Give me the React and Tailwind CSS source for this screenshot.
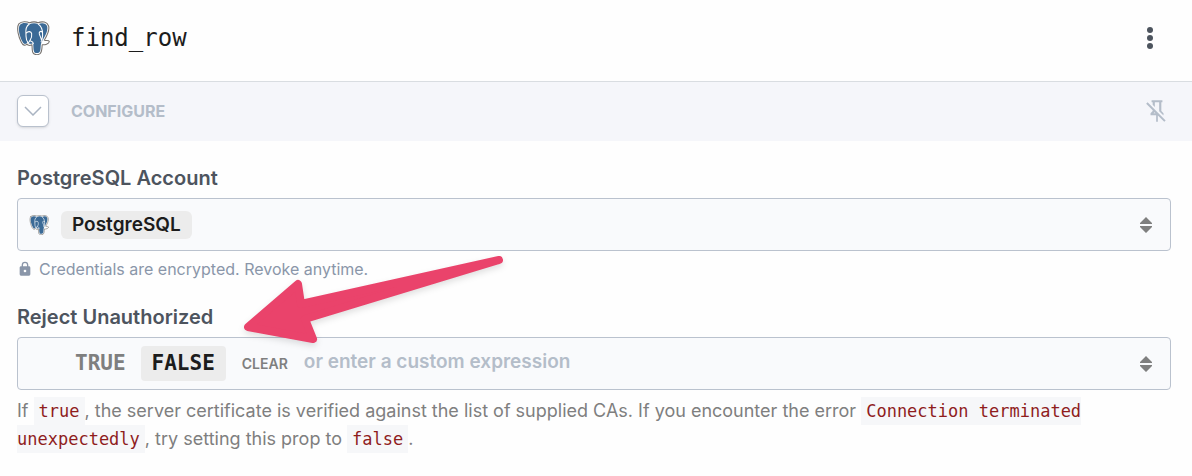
import React, { useState } from 'react';

const PostgresIcon = ({ className }) => (
    <svg viewBox="0 0 96 96" className={className} aria-hidden="true">
        <g strokeLinejoin="round" strokeLinecap="round">
            <path
                d="M8 8C16 0 30 1 38 5C46 2 56 2 62 5C74 0 88 2 92 14C96 28 86 44 80 54C84 57 92 53 94 58C92 65 82 68 74 67C73 76 74 86 68 92C62 97 49 96 47 88C45 81 46 74 45 67C38 71 32 68 31 65C27 71 19 69 15 60C8 46 0 20 8 8Z"
                fill="#fff"
                stroke="#77736f"
                strokeWidth="3"
            />
            <path
                d="M11 11C18 4 30 5 38 9C46 5 56 5 63 9C73 4 85 6 88 15C91 28 82 43 75 55C71 61 71 64 70 68C69 78 70 84 66 88C61 92 52 91 51 86C48 78 50 70 48 62C44 66 37 65 33 60C28 67 21 66 18 58C11 44 4 21 11 11Z"
                fill="#3b6a96"
            />
            <path
                d="M37 9C29 14 27 24 28 36C29 47 27 54 34 61M29 34C34 28 43 29 44 35C45 43 46 47 40 54C37 58 38 61 33 61M40 56C44 58 48 57 49 64M63 9C70 14 75 23 75 36C76 45 73 51 73 55M74 31C69 27 64 31 66 37C68 43 71 48 72 54M71 58C76 62 84 61 90 59"
                fill="none"
                stroke="#fff"
                strokeWidth="3"
            />
        </g>
    </svg>
);

const LockIcon = () => (
    <svg viewBox="0 0 24 24" className="size-4 shrink-0 fill-current" aria-hidden="true">
        <path d="M12,17A2,2 0 0,0 14,15C14,13.89 13.1,13 12,13A2,2 0 0,0 10,15A2,2 0 0,0 12,17M18,8A2,2 0 0,1 20,10V20A2,2 0 0,1 18,22H6A2,2 0 0,1 4,20V10C4,8.89 4.9,8 6,8H7V6A5,5 0 0,1 12,1A5,5 0 0,1 17,6V8H18M12,3A3,3 0 0,0 9,6V8H15V6A3,3 0 0,0 12,3Z" />
    </svg>
);

const PinOffIcon = () => (
    <svg viewBox="0 0 24 24" className="size-[26px] fill-current" aria-hidden="true">
        <path d="M8,6.2V4H7V2H17V4H16V12L18,14V16H17.8L14,12.2V4H10V8.2L8,6.2M20,20.7L18.7,22L12.8,16.1V22H11.2V16H6V14L8,12V11.3L2,5.3L3.3,4L20,20.7M8.8,14H10.6L9.7,13.1L8.8,14Z" />
    </svg>
);

const SortIcon = () => (
    <svg viewBox="0 0 12 16" className="h-4 w-3 shrink-0 fill-[#7f7f7f]" aria-hidden="true">
        <path d="M6 0L12 6V7H0V6ZM0 9H12V10L6 16L0 10Z" />
    </svg>
);

const Code = ({ children }) => (
    <code className="bg-[#f6f7f9] px-[5px] py-1 font-['DejaVu_Sans_Mono',monospace] text-[17px] text-[#8f1d1d]">
        {children}
    </code>
);

const fieldClass = 'flex h-[53px] items-center rounded border border-[#bac2ce] bg-[#f9fafc] pr-[18px]';
const labelClass = 'block text-xl leading-6 font-semibold text-[#4d545e]';
const choiceBase = "h-[35px] rounded px-[11px] font-['DejaVu_Sans_Mono',monospace] text-[21px] font-bold";

function App() {
    const [open, setOpen] = useState(true);
    const [reject, setReject] = useState('false');
    const [expression, setExpression] = useState('');

    const choiceClass = (value) =>
        `${choiceBase} ${reject === value ? 'bg-[#ececec] text-[#1c1c1c]' : 'text-[#7f7f7f]'}`;

    return (
        <div className="relative min-h-screen bg-[#fefefe] font-['Inter',sans-serif]">
            <header className="flex h-[82px] items-center border-b border-[#d9dde1] pr-[30px] pb-[5px] pl-4">
                <PostgresIcon className="size-[34px]" />
                <h1 className="ml-[21px] flex-1 font-['DejaVu_Sans_Mono',monospace] text-2xl text-[#1c1c1c]">find_row</h1>
                <button type="button" aria-label="More" className="px-2 py-1">
                    <svg viewBox="0 0 8 24" className="h-6 w-2 fill-[#4d545e]">
                        <circle cx="4" cy="4" r="3" />
                        <circle cx="4" cy="12" r="3" />
                        <circle cx="4" cy="20" r="3" />
                    </svg>
                </button>
            </header>

            <div className="flex h-[59px] items-center bg-[#f5f6fa] pr-[22px] pb-[2px] pl-[17px] text-[#b4bdc9]">
                <button
                    type="button"
                    aria-label="Toggle configure"
                    aria-expanded={open}
                    onClick={() => setOpen(!open)}
                    className="flex size-8 items-center justify-center rounded-md border border-[#b9c1cd] bg-white shadow-sm"
                >
                    <svg viewBox="0 0 18 10" className="h-[10px] w-[18px] fill-none stroke-[#aab4c2] stroke-[1.5]">
                        <path d="M1 1L9 9L17 1" />
                    </svg>
                </button>
                <h2 className="ml-[22px] flex-1 text-base font-bold">CONFIGURE</h2>
                <button type="button" aria-label="Unpin">
                    <PinOffIcon />
                </button>
            </div>

            {open && (
                <main className="pt-[25px] pr-[21px] pl-[17px]">
                    <label htmlFor="account" className={labelClass}>PostgreSQL Account</label>
                    <div className={`${fieldClass} mt-2 pl-[11px]`}>
                        <PostgresIcon className="size-5 shrink-0" />
                        <select
                            id="account"
                            className="ml-3 h-7 appearance-none rounded-md bg-[#ececec] px-[11px] text-[19px] leading-7 font-semibold text-[#1c1c1c]"
                        >
                            <option>PostgreSQL</option>
                        </select>
                        <span className="flex-1" />
                        <SortIcon />
                    </div>
                    <p className="mt-[7px] flex items-center gap-[6px] text-base leading-[22px] text-[#8a96a9]">
                        <LockIcon />
                        Credentials are encrypted. Revoke anytime.
                    </p>

                    <label htmlFor="expression" className={`${labelClass} mt-[25px]`}>Reject Unauthorized</label>
                    <div className={`${fieldClass} mt-2 pl-[46px]`}>
                        <button type="button" onClick={() => setReject('true')} className={choiceClass('true')}>
                            TRUE
                        </button>
                        <button
                            type="button"
                            onClick={() => setReject('false')}
                            className={`ml-1 ${choiceClass('false')}`}
                        >
                            FALSE
                        </button>
                        <button
                            type="button"
                            onClick={() => setReject('')}
                            className="ml-4 text-sm font-semibold text-[#7f7f7f]"
                        >
                            CLEAR
                        </button>
                        <input
                            id="expression"
                            type="text"
                            value={expression}
                            onChange={(e) => setExpression(e.target.value)}
                            placeholder="or enter a custom expression"
                            className="ml-4 h-8 min-w-0 flex-1 bg-transparent pb-1 text-[19px] font-semibold outline-none placeholder:text-[#b4bdc9]"
                        />
                        <SortIcon />
                    </div>
                    <p className="mt-[7px] text-lg leading-7 text-[#7f7f7f]">
                        If <Code>true</Code>, the server certificate is verified against the list of supplied CAs. If you
                        encounter the error <Code>Connection terminated unexpectedly</Code>, try setting this prop
                        to <Code>false</Code>.
                    </p>
                </main>
            )}

            {/* callout arrow over the form */}
            <svg
                viewBox="0 0 270 96"
                className="pointer-events-none absolute top-[252px] left-[238px] h-24 w-[270px] overflow-visible drop-shadow-md"
                aria-hidden="true"
            >
                <path
                    d="M10 75L60 32L63 52L261 8L67 67L75 87Z"
                    fill="#ea436b"
                    stroke="#ea436b"
                    strokeWidth="8"
                    strokeLinejoin="round"
                />
            </svg>
        </div>
    );
}

export default App;
